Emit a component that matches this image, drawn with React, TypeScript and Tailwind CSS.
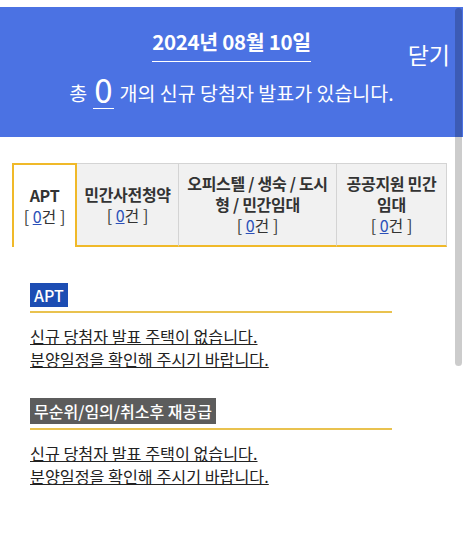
import React from "react"

const TABS = [
  { title: ["APT"], count: 0, active: true, w: "w-[65px]" },
  { title: ["민간사전청약"], count: 0, w: "w-[102px]" },
  { title: ["오피스텔 / 생숙 / 도시", "형 / 민간임대"], count: 0, w: "w-[158px]" },
  { title: ["공공지원 민간", "임대"], count: 0, w: "flex-1" },
]

const SECTIONS = [
  { label: "APT", color: "bg-[#1c4db3] leading-[24px]" },
  { label: "무순위/임의/취소후 재공급", color: "bg-[#5c5c5c] leading-[26px] mt-[3px]" },
]

function Tab({ tab }: { tab: (typeof TABS)[number] }) {
  return (
    <div
      className={
        tab.active
          ? `${tab.w} flex flex-col items-center justify-center border-2 border-b-0 border-[#f0b929] bg-white`
          : `${tab.w} flex flex-col items-center justify-center border-t border-r border-[#d4d4d4] border-b-2 border-b-[#f0b929] bg-[#f1f1f1]`
      }
    >
      {tab.title.map((t) => (
        <div key={t} className="font-bold text-[16px] leading-[21px] tracking-[-0.3px] text-[#333] text-center">
          {t}
        </div>
      ))}
      <div className="text-[16px] leading-[21px] text-[#333]">
        [ <span className="text-[#2c50b8] underline">{tab.count}</span>건 ]
      </div>
    </div>
  )
}

export default function App() {
  return (
    <div
      className="relative w-[463px] h-[539px] bg-white overflow-hidden"
      style={{ fontFamily: '"Noto Sans CJK KR", "Noto Sans", sans-serif' }}
    >
      <div className="pt-[7px]">
        <div className="relative h-[130px] bg-[#4b72e3] text-white flex flex-col items-center">
          <div className="mt-[19px] font-bold text-[20.5px] leading-[30px] tracking-[-0.3px] pb-[5px] border-b border-white">
            2024년 08월 10일
          </div>
          <div className="mt-[9px] flex items-end text-[19.5px] leading-[28px]">
            <span className="mb-[2px]">총</span>
            <span className="mx-[6px] text-[33px] leading-[37px] border-b border-white px-[1px]">0</span>
            <span className="mb-[2px]">개의 신규 당첨자 발표가 있습니다.</span>
          </div>
          <button className="absolute right-[13px] top-[31px] text-[23px] leading-[32px] text-white">닫기</button>
        </div>
      </div>

      <div className="mx-[12px] mr-[16px] mt-[26px] flex h-[84px]">
        {TABS.map((tab, i) => (
          <Tab key={i} tab={tab} />
        ))}
      </div>

      <div className="ml-[30px] w-[362px] mt-[36px] flex flex-col gap-[24px]">
        {SECTIONS.map((s) => (
          <div key={s.label}>
            <span className={`${s.color} inline-block px-[4px] text-white font-medium text-[16px]`}>
              {s.label}
            </span>
            <div className="mt-[4px] h-[2px] bg-[#e9c24f]" />
            <div className="mt-[12px] text-[16.2px] leading-[23px] text-[#222]">
              <p className="underline">신규 당첨자 발표 주택이 없습니다.</p>
              <p className="underline">분양일정을 확인해 주시기 바랍니다.</p>
            </div>
          </div>
        ))}
      </div>

      <div className="absolute right-[1px] top-[8px] w-[7px] h-[358px] rounded-full bg-black/20" />
    </div>
  )
}
